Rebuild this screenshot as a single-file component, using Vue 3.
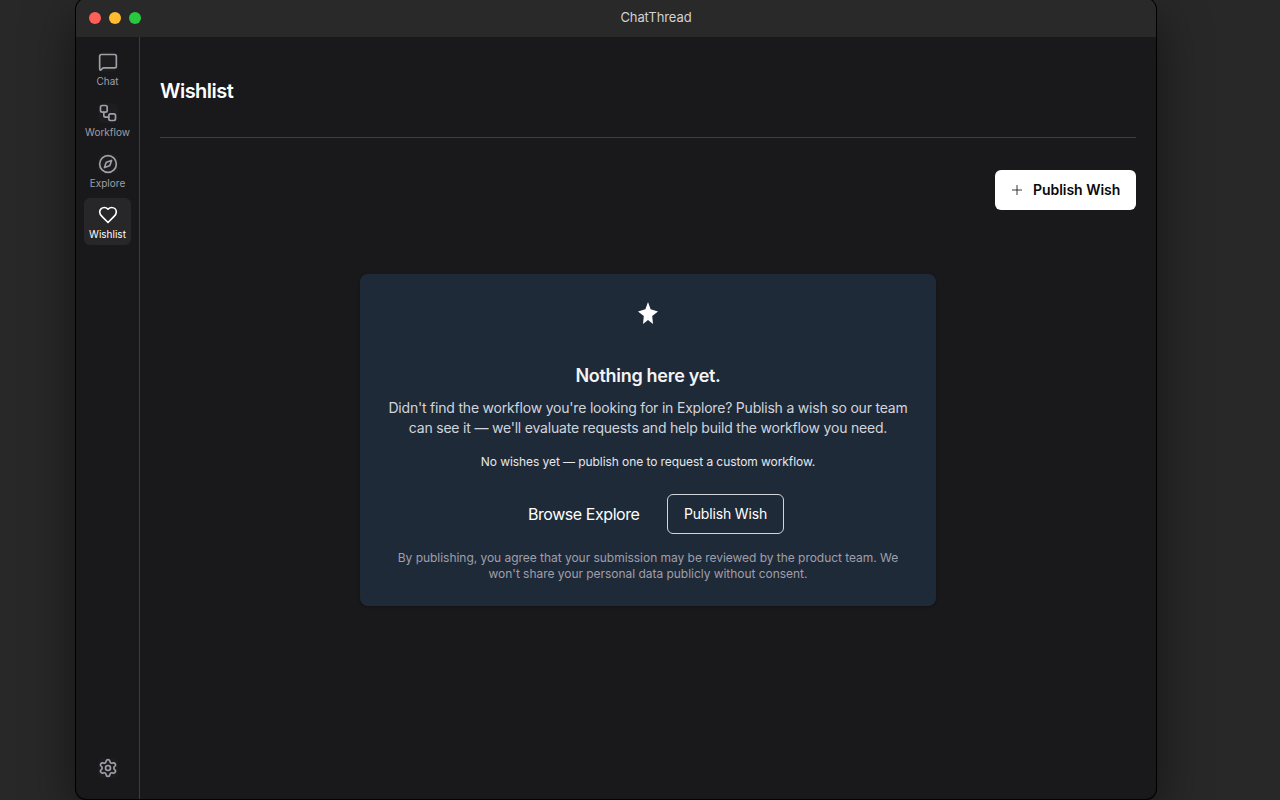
<script setup>
const nav = [
  { label: 'Chat', icon: 'chat' },
  { label: 'Workflow', icon: 'workflow' },
  { label: 'Explore', icon: 'explore' },
  { label: 'Wishlist', icon: 'heart', active: true },
]
</script>

<template>
  <div class="desktop">
    <div class="window">
      <header class="titlebar">
        <div class="lights"><i class="red"></i><i class="yellow"></i><i class="green"></i></div>
        <span class="app-name">ChatThread</span>
      </header>
      <div class="body">
        <aside class="sidebar">
          <nav>
            <a v-for="n in nav" :key="n.label" class="item" :class="{ active: n.active }">
              <svg class="icon" viewBox="0 0 24 24">
                <path v-if="n.icon === 'chat'" d="M22 17a2 2 0 0 1-2 2H6.828a2 2 0 0 0-1.414.586l-2.202 2.202A.71.71 0 0 1 2 21.286V5a2 2 0 0 1 2-2h16a2 2 0 0 1 2 2z" />
                <template v-else-if="n.icon === 'workflow'">
                  <rect x="3" y="3" width="8" height="8" rx="2" />
                  <path d="M7 11v4a2 2 0 0 0 2 2h4" />
                  <rect x="13" y="13" width="8" height="8" rx="2" />
                </template>
                <template v-else-if="n.icon === 'explore'">
                  <circle cx="12" cy="12" r="10" />
                  <path d="m16.24 7.76-1.804 5.411a2 2 0 0 1-1.265 1.265L7.76 16.24l1.804-5.411a2 2 0 0 1 1.265-1.265z" />
                </template>
                <path v-else d="M19 14c1.49-1.46 3-3.21 3-5.5A5.5 5.5 0 0 0 16.5 3c-1.76 0-3 .5-4.5 2-1.5-1.5-2.74-2-4.5-2A5.5 5.5 0 0 0 2 8.5c0 2.3 1.5 4.05 3 5.5l7 7Z" />
              </svg>
              <span class="label">{{ n.label }}</span>
            </a>
          </nav>
          <a class="settings">
            <svg class="icon" viewBox="0 0 24 24">
              <path d="M9.671 4.136a2.34 2.34 0 0 1 4.659 0 2.34 2.34 0 0 0 3.319 1.915 2.34 2.34 0 0 1 2.33 4.033 2.34 2.34 0 0 0 0 3.831 2.34 2.34 0 0 1-2.33 4.033 2.34 2.34 0 0 0-3.319 1.915 2.34 2.34 0 0 1-4.659 0 2.34 2.34 0 0 0-3.32-1.915 2.34 2.34 0 0 1-2.33-4.033 2.34 2.34 0 0 0 0-3.831A2.34 2.34 0 0 1 6.35 6.051a2.34 2.34 0 0 0 3.319-1.915" />
              <circle cx="12" cy="12" r="3" />
            </svg>
          </a>
        </aside>
        <main>
          <div class="heading"><h1>Wishlist</h1></div>
          <div class="toolbar">
            <button class="primary">
              <svg class="plus" viewBox="0 0 12 12"><path d="M6 1v10M1 6h10" /></svg>
              <span>Publish Wish</span>
            </button>
          </div>
          <section class="card">
            <svg class="star" viewBox="0 0 20 22"><path d="M10 0l2.6 7.3L20 9.6l-5.8 4.4L15 22l-5-4.1L5 22l.8-8L0 9.6l7.4-2.3z" /></svg>
            <h2>Nothing here yet.</h2>
            <p class="lead">Didn't find the workflow you're looking for in Explore? Publish a wish so our team<br>can see it — we'll evaluate requests and help build the workflow you need.</p>
            <p class="note">No wishes yet — publish one to request a custom workflow.</p>
            <div class="actions">
              <a class="browse">Browse Explore</a>
              <button class="outline">Publish Wish</button>
            </div>
            <p class="legal">By publishing, you agree that your submission may be reviewed by the product team. We<br>won't share your personal data publicly without consent.</p>
          </section>
        </main>
      </div>
    </div>
  </div>
</template>

<style>
html, body { margin: 0; background: #282828; overflow: hidden; }
</style>

<style scoped>
* { box-sizing: border-box; }
.desktop {
  height: 800px;
  overflow: hidden;
  background: #282828;
  padding: 0 124px 1px 76px;
  font-family: Inter, "Liberation Sans", sans-serif;
  -webkit-font-smoothing: antialiased;
}
.window {
  height: 800px;
  margin-top: -1px;
  border-radius: 10px;
  overflow: hidden;
  background: #19191b;
  box-shadow: 0 0 0 1px #000, 0 18px 50px rgba(0, 0, 0, .5);
  display: flex;
  flex-direction: column;
}
.titlebar {
  flex: 0 0 38px;
  background: #292929;
  display: grid;
  grid-template-columns: 80px 1fr;
  align-items: center;
}
.lights { display: flex; gap: 8px; padding-left: 13px; }
.lights i { width: 12px; height: 12px; border-radius: 50%; }
.red { background: #ff5f57; }
.yellow { background: #febc2e; }
.green { background: #28c840; }
.app-name { font-size: 13px; line-height: 16px; color: #d2d2d2; letter-spacing: -.08px; text-align: center; padding-bottom: 2px; }
.body { flex: 1; display: flex; min-height: 0; }
.sidebar {
  width: 64px;
  border-right: 1px solid #3c3c40;
  padding: 8px;
  display: flex;
  flex-direction: column;
  justify-content: space-between;
}
nav { display: flex; flex-direction: column; gap: 4px; }
.item {
  height: 47px;
  border-radius: 6px;
  color: #9f9fa9;
  display: flex;
  flex-direction: column;
  align-items: center;
  padding-top: 7px;
}
.item.active { background: #27272a; color: #fff; }
.icon {
  width: 20px;
  height: 20px;
  flex: none;
  fill: none;
  stroke: currentColor;
  stroke-width: 2;
  stroke-linecap: round;
  stroke-linejoin: round;
}
.item:not(.active) .icon, .settings .icon { background: #1d1d1f; border-radius: 5px; }
.label { font-size: 10px; line-height: 15px; margin-top: 2px; white-space: nowrap; }
.settings { height: 45px; display: flex; justify-content: center; padding-top: 12px; color: #9f9fa9; }
main { flex: 1; padding: 0 20px; display: flex; flex-direction: column; }
.heading { height: 101px; padding-top: 40px; border-bottom: 1px solid #3f3f42; }
h1 { margin: 0; font-size: 20px; line-height: 28px; font-weight: 600; letter-spacing: -.5px; color: #fff; }
.toolbar { display: flex; justify-content: flex-end; margin-top: 32px; }
button { font: inherit; }
.primary {
  width: 141px;
  height: 40px;
  padding: 0 0 0 16px;
  border: 0;
  border-radius: 6px;
  background: #fff;
  color: #09090b;
  font-size: 14px;
  font-weight: 600;
  letter-spacing: -.04px;
  display: flex;
  align-items: center;
  gap: 10px;
  white-space: nowrap;
}
.primary span { padding-bottom: 2px; }
.plus { width: 12px; height: 12px; fill: none; stroke: #09090b; stroke-width: .8; }
.card {
  width: 576px;
  height: 332px;
  margin: 64px auto 0;
  padding: 28px 0 0;
  border-radius: 8px;
  background: #1f2a39;
  box-shadow: 0 1px 3px rgba(0, 0, 0, .3);
  text-align: center;
  display: flex;
  flex-direction: column;
  align-items: center;
  white-space: nowrap;
}
.star { width: 20px; height: 22px; fill: #fff; }
h2 { margin: 38px 0 0; font-size: 18px; line-height: 28px; font-weight: 600; letter-spacing: -.3px; color: #f4f4f5; }
p { margin: 0; }
.lead { margin-top: 8px; font-size: 14px; line-height: 20px; letter-spacing: -.2px; color: #d1d5db; }
.note { margin-top: 16px; font-size: 12px; line-height: 16px; letter-spacing: -.075px; color: #e5e7eb; }
.actions { margin-top: 24px; display: flex; align-items: center; gap: 28px; padding-left: 16px; }
.browse { width: 111px; font-size: 16px; line-height: 24px; letter-spacing: -.44px; color: #fff; }
.outline {
  width: 117px;
  height: 40px;
  padding: 0 0 2px;
  border: 1px solid #d1d5db;
  border-radius: 6px;
  background: transparent;
  color: #fff;
  font-size: 14px;
  letter-spacing: -.15px;
}
.legal { margin-top: 16px; font-size: 12px; line-height: 16px; letter-spacing: -.035px; color: #9f9fa9; }
</style>
